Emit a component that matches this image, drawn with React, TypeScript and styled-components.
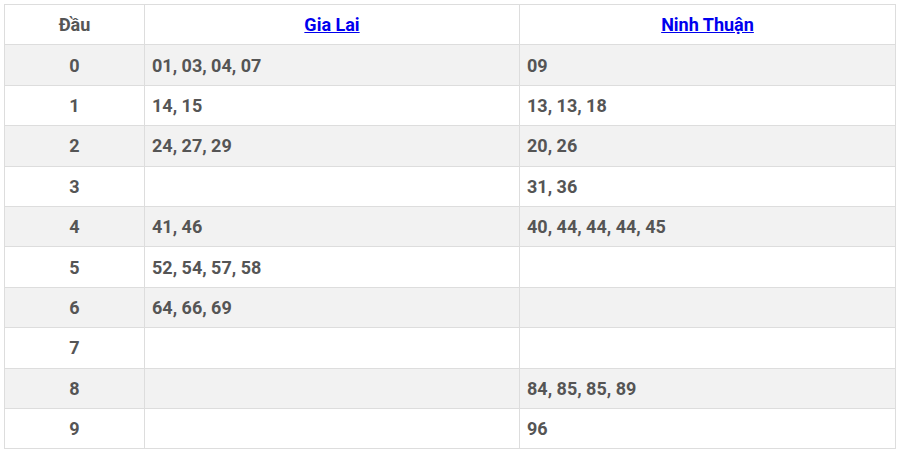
import styled, {createGlobalStyle} from "styled-components";

const GlobalStyle = createGlobalStyle`
    body {
        margin: 0;
        background: #ffffff;
        font-family: Roboto, "Liberation Sans", sans-serif;
    }
`

type RowType = {
    head: string
    gialai: string
    ninhthuan: string
}

const rows: RowType[] = [
    {head: '0', gialai: '01, 03, 04, 07', ninhthuan: '09'},
    {head: '1', gialai: '14, 15', ninhthuan: '13, 13, 18'},
    {head: '2', gialai: '24, 27, 29', ninhthuan: '20, 26'},
    {head: '3', gialai: '', ninhthuan: '31, 36'},
    {head: '4', gialai: '41, 46', ninhthuan: '40, 44, 44, 44, 45'},
    {head: '5', gialai: '52, 54, 57, 58', ninhthuan: ''},
    {head: '6', gialai: '64, 66, 69', ninhthuan: ''},
    {head: '7', gialai: '', ninhthuan: ''},
    {head: '8', gialai: '', ninhthuan: '84, 85, 85, 89'},
    {head: '9', gialai: '', ninhthuan: '96'},
]

export default function App() {
    return (
        <Wrapper>
            <GlobalStyle/>
            <Table>
                <colgroup>
                    <col style={{width: '140px'}}/>
                    <col style={{width: '375px'}}/>
                    <col/>
                </colgroup>
                <thead>
                    <tr>
                        <HeadCell>Đầu</HeadCell>
                        <HeadCell><ProvinceLink href={'#'}>Gia Lai</ProvinceLink></HeadCell>
                        <HeadCell><ProvinceLink href={'#'}>Ninh Thuận</ProvinceLink></HeadCell>
                    </tr>
                </thead>
                <tbody>
                    {rows.map((row, i) => (
                        <Row key={row.head} striped={i % 2 === 0}>
                            <Cell center>{row.head}</Cell>
                            <Cell>{row.gialai}</Cell>
                            <Cell>{row.ninhthuan}</Cell>
                        </Row>
                    ))}
                </tbody>
            </Table>
        </Wrapper>
    );
}

const Wrapper = styled.div`
    padding: 4px 5px 4px 4px;
`

const Table = styled.table`
    width: 892px;
    border-collapse: collapse;
    table-layout: fixed;
    border: 1px solid #dddddd;
`

const HeadCell = styled.th`
    height: 39.4px;
    padding: 0 7px;
    border: 1px solid #dddddd;
    text-align: center;
    font-size: 18px;
    font-weight: 700;
    color: #555555;
`

const ProvinceLink = styled.a`
    color: #0000ee;
    text-decoration: underline;
`

const Row = styled.tr<{striped?: boolean}>`
    background-color: ${props => props.striped ? '#f2f2f2' : '#ffffff'};
`

const Cell = styled.td<{center?: boolean}>`
    height: 39.4px;
    padding: 0 7px;
    border: 1px solid #dddddd;
    text-align: ${props => props.center ? 'center' : 'left'};
    font-size: 18px;
    font-weight: 700;
    color: #555555;
`
